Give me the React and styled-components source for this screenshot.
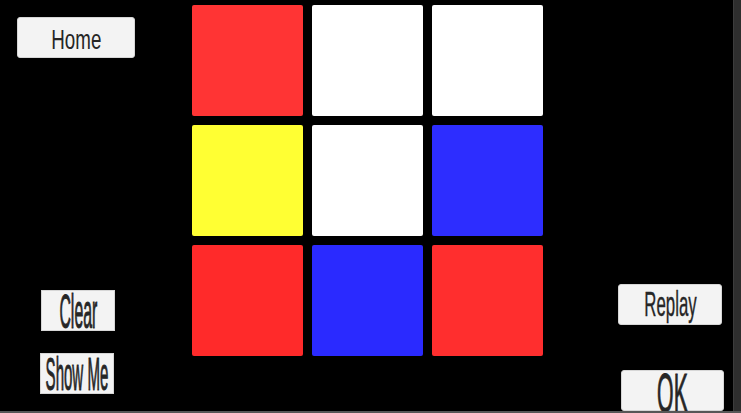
import React from 'react'
import styled, { createGlobalStyle } from 'styled-components'

const Global = createGlobalStyle`
html, body{
    margin: 0;
    padding: 0;
    background: #000;
}
`

const Screen = styled.div`
width: 741px;
height: 411px;
display: flex;
background: #000;
border-bottom: 2px solid #575757;
overflow: hidden;
`

const Stage = styled.div`
flex: 0 0 733px;
height: 411px;
display: flex;
overflow: hidden;
`

const Edge = styled.div`
flex: 1;
background: #2e2e2e;
border-left: 1px solid #3c3c3c;
`

const LeftPanel = styled.div`
flex: 0 0 192px;
box-sizing: border-box;
padding: 17px 0 17px 17px;
display: flex;
flex-direction: column;
justify-content: space-between;
`

const ButtonStack = styled.div`
display: flex;
flex-direction: column;
gap: ${p => p.$gap}px;
`

const Board = styled.div`
align-self: flex-start;
margin-top: 5px;
display: grid;
grid-template-columns: repeat(3, 111px);
grid-auto-rows: 111px;
gap: 9px;
`

const Tile = styled.div`
border-radius: 2px;
background: ${p => p.$color};
`

const RightPanel = styled.div`
flex: 1;
display: flex;
flex-direction: column;
justify-content: flex-end;
`

const Btn = styled.button`
box-sizing: border-box;
width: ${p => p.$w}px;
height: 41px;
margin-left: ${p => p.$left || 0}px;
padding: 0;
display: flex;
align-items: center;
justify-content: center;
background: #f3f3f3;
border: 1px solid #d6d6d6;
border-radius: ${p => (p.$square ? 0 : 3)}px;
cursor: pointer;
`

const Label = styled.span`
display: inline-block;
font-family: "Liberation Sans", Arial, sans-serif;
font-size: ${p => p.$size}px;
line-height: 0.7;
color: #262626;
-webkit-text-stroke: ${p => p.$stroke || 0}px #262626;
white-space: nowrap;
transform: translateY(${p => p.$dy || 0}px) scaleX(${p => p.$sx});
`

const tiles = [
  '#ff3434', '#ffffff', '#ffffff',
  '#ffff33', '#ffffff', '#2d2dff',
  '#ff2a2a', '#2a2aff', '#ff2e2e',
]

const App = () => {
  return (
    <>
      <Global />
      <Screen>
        <Stage>
          <LeftPanel>
            <Btn $w={118}>
              <Label $size={28} $sx={0.67} $dy={2}>Home</Label>
            </Btn>
            <ButtonStack $gap={22}>
              <Btn $w={74} $left={24} $square>
                <Label $size={48} $sx={0.33} $dy={1} $stroke={1}>Clear</Label>
              </Btn>
              <Btn $w={74} $left={23} $square>
                <Label $size={47} $sx={0.32} $dy={1} $stroke={1}>Show Me</Label>
              </Btn>
            </ButtonStack>
          </LeftPanel>

          <Board>
            {tiles.map((c, i) => (
              <Tile key={i} $color={c} />
            ))}
          </Board>

          <RightPanel>
            <ButtonStack $gap={45}>
              <Btn $w={104} $left={75}>
                <Label $size={35} $sx={0.48} $stroke={0.4}>Replay</Label>
              </Btn>
              <Btn $w={103} $left={78}>
                <Label $size={56} $sx={0.38} $dy={2} $stroke={1}>OK</Label>
              </Btn>
            </ButtonStack>
          </RightPanel>
        </Stage>
        <Edge />
      </Screen>
    </>
  )
}

export default App
